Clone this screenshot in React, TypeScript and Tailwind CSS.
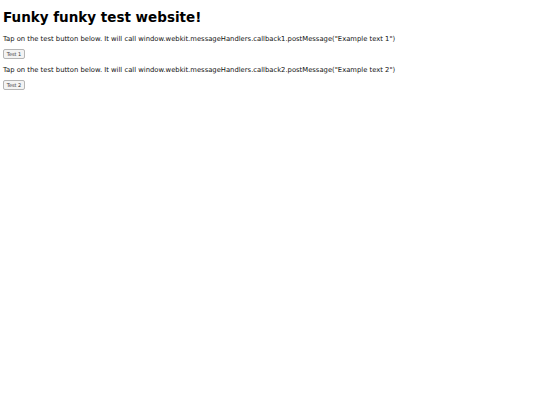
export default function App() {
  const send = (n: number) => {
    const w = window as any;
    w.webkit?.messageHandlers?.[`callback${n}`]?.postMessage(`Example text ${n}`);
  };

  return (
    <div className="min-h-screen bg-white px-[3px] pt-[8px] text-black antialiased font-['DejaVu_Sans',sans-serif]">
      <h1 className="text-[13.5px] leading-[19px] font-bold">Funky funky test website!</h1>
      <p className="mt-[8px] text-[6.8px] leading-[9px] text-[#111]">
        Tap on the test button below. It will call window.webkit.messageHandlers.callback1.postMessage("Example text 1")
      </p>
      <button
        onClick={() => send(1)}
        className="mt-[5px] block h-[10px] w-[22px] rounded-[2px] border border-[#b5b5b5] bg-[#f3f3f3] text-[5px] leading-[8px] text-[#333]"
      >
        Test 1
      </button>
      <p className="mt-[7px] text-[6.8px] leading-[9px] text-[#111]">
        Tap on the test button below. It will call window.webkit.messageHandlers.callback2.postMessage("Example text 2")
      </p>
      <button
        onClick={() => send(2)}
        className="mt-[5px] block h-[10px] w-[22px] rounded-[2px] border border-[#b5b5b5] bg-[#f3f3f3] text-[5px] leading-[8px] text-[#333]"
      >
        Test 2
      </button>
    </div>
  );
}
